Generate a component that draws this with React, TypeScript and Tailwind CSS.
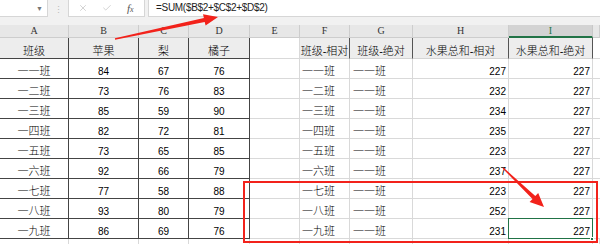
import { X, Check } from 'lucide-react';

const GRID = 'grid grid-cols-[69px_70px_50px_61px_50px_50px_63px_96px_84px_7px]';
const CJK = "font-['Liberation_Sans','Noto_Sans_CJK_SC',sans-serif] font-light";
const NUM = "font-['Liberation_Sans',sans-serif]";

const letters = ['A', 'B', 'C', 'D', 'E', 'F', 'G', 'H', 'I', ''];

const rows = [
  ['一一班', '84', '67', '76', '一一班', '227'],
  ['一二班', '73', '76', '83', '一二班', '232'],
  ['一三班', '85', '59', '90', '一三班', '234'],
  ['一四班', '82', '72', '81', '一四班', '235'],
  ['一五班', '73', '65', '85', '一五班', '223'],
  ['一六班', '92', '66', '79', '一六班', '237'],
  ['一七班', '77', '58', '88', '一七班', '223'],
  ['一八班', '93', '80', '79', '一八班', '252'],
  ['一九班', '86', '69', '76', '一九班', '231'],
];

function Toolbar() {
  return (
    <div className="flex h-[18px] bg-[#f1f1f1]">
      <div className="flex h-[17px] w-[48px] items-center justify-end border-r border-b border-[#d6d6d6] bg-white pr-[4px]">
        <span className="text-[7px] leading-none text-[#777]">▼</span>
      </div>
      <div className="flex w-[20px] items-center justify-center text-[9px] leading-none text-[#b9b9b9]">⋮</div>
      <div className="flex h-[17px] w-[77px] items-center border-x border-b border-[#d6d6d6] bg-white">
        <X className="ml-[9px] h-[10px] w-[10px] text-[#b8b8b8]" strokeWidth={1.5} />
        <Check className="ml-[14px] h-[10px] w-[10px] text-[#b8b8b8]" strokeWidth={1.5} />
        <span className="ml-[15px] font-['Liberation_Serif',serif] text-[11px] italic leading-none text-[#555]">
          f<span className="text-[8px]">x</span>
        </span>
      </div>
      <div className="w-[3px]" />
      <div className="flex h-[17px] flex-1 items-center border-l border-b border-[#d6d6d6] bg-white pl-[7px]">
        <span className={`${NUM} text-[10px] leading-none tracking-[-0.3px] text-[#222]`}>=SUM($B$2+$C$2+$D$2)</span>
      </div>
    </div>
  );
}

function ColumnHeaders() {
  return (
    <div className={`${GRID} h-[13px] bg-[#e7e7e7]`}>
      {letters.map((l, i) =>
        l === 'I' ? (
          <div
            key={i}
            className="flex items-center justify-center border-r border-b-2 border-r-[#c8c8c8] border-b-[#217346] bg-[#d3d3d3] font-['Liberation_Serif',serif] text-[10px] leading-none text-[#217346]"
          >
            {l}
          </div>
        ) : (
          <div
            key={i}
            className="flex items-center justify-center border-r border-b border-[#cdcdcd] font-['Liberation_Serif',serif] text-[10px] leading-none text-[#333]"
          >
            {l}
          </div>
        )
      )}
    </div>
  );
}

function HeaderRow() {
  const dark = `flex items-end justify-center overflow-hidden whitespace-nowrap border-r border-b border-[#444] bg-[#ededed] pb-[1px] ${CJK} text-[11px] leading-none text-black`;
  const side = `flex items-end justify-center overflow-hidden whitespace-nowrap border-r border-b border-r-[#555] border-b-[#d4d4d4] bg-[#ededed] pb-[1px] ${CJK} text-[11px] leading-none text-black`;
  return (
    <div className={`${GRID} h-[21px]`}>
      <div className={dark}>班级</div>
      <div className={dark}>苹果</div>
      <div className={dark}>梨</div>
      <div className={dark}>橘子</div>
      <div className="border-r border-b border-[#d9d9d9]" />
      <div className={side}>班级-相对</div>
      <div className={side}>班级-绝对</div>
      <div className={side}>水果总和-相对</div>
      <div className={side}>水果总和-绝对</div>
      <div className="border-b border-[#d9d9d9]" />
    </div>
  );
}

function DataRow({ row, selected }: { row: string[]; selected: boolean }) {
  const dark = 'flex items-end justify-center border-r border-b border-[#444] pb-[1px] leading-none text-black';
  const light = 'flex items-end border-r border-b border-[#d9d9d9] pb-[1px] leading-none text-black';
  return (
    <div className={`${GRID} h-[20px]`}>
      <div className={`${dark} ${CJK} text-[11px]`}>{row[0]}</div>
      <div className={`${dark} ${NUM} text-[10px]`}>{row[1]}</div>
      <div className={`${dark} ${NUM} text-[10px]`}>{row[2]}</div>
      <div className={`${dark} ${NUM} text-[10px]`}>{row[3]}</div>
      <div className={light} />
      <div className={`${light} ${CJK} pl-[2px] text-[11px]`}>{row[4]}</div>
      <div className={`${light} ${CJK} pl-[3px] text-[11px]`}>一一班</div>
      <div className={`${light} ${NUM} justify-end pr-[2px] text-[10px]`}>{row[5]}</div>
      <div className={`${light} ${NUM} relative justify-end pr-[2px] text-[10px]`}>
        227
        {selected && (
          <>
            <div className="absolute inset-[-1px] border border-[#217346]" />
            <div className="absolute right-[-2px] bottom-[-3px] h-[4px] w-[4px] border border-white bg-[#217346]" />
          </>
        )}
      </div>
      <div className="border-b border-[#d9d9d9]" />
    </div>
  );
}

function EmptyRow() {
  return (
    <div className={`${GRID} h-[10px]`}>
      {letters.map((_, i) => (
        <div key={i} className="border-r border-[#d9d9d9]" />
      ))}
    </div>
  );
}

function Annotations() {
  return (
    <svg className="pointer-events-none absolute top-0 left-0" width={600} height={244}>
      <polygon
        fill="#f2221b"
        points="114.9,38.3 115.1,39.7 204.7,22 205.6,25.5 218,17 203,14.3 203.9,18"
      />
      <rect x={244} y={182} width={353} height={60} fill="none" stroke="#f2221b" strokeWidth={2} />
      <polygon
        fill="#f2221b"
        points="502.6,168.5 503.4,167.5 535.3,195.9 538.2,192.9 544,207 529.6,201.9 532.5,198.9"
      />
    </svg>
  );
}

export default function App() {
  return (
    <div className="relative h-[244px] w-[600px] overflow-hidden bg-white">
      <Toolbar />
      <div className="h-[7px] bg-[#f1f1f1]" />
      <ColumnHeaders />
      <HeaderRow />
      {rows.map((r, i) => (
        <DataRow key={i} row={r} selected={i === rows.length - 1} />
      ))}
      <EmptyRow />
      <Annotations />
    </div>
  );
}
